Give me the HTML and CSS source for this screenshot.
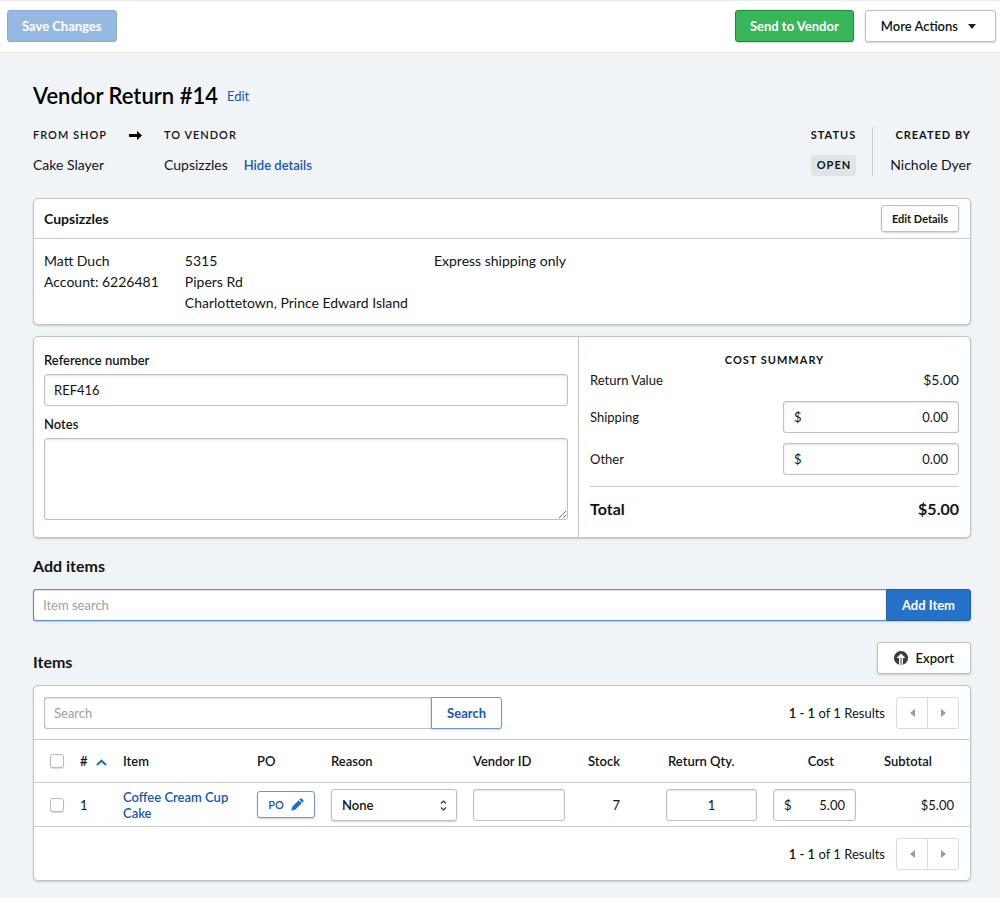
FILE: index.html
```html
<!DOCTYPE html>
<html lang="en">
<head>
<meta charset="utf-8">
<title>Vendor Return #14</title>
<link rel="stylesheet" href="styles.css">
</head>
<body>
<header class="topbar">
  <button class="btn btn-save" type="button">Save Changes</button>
  <div class="topbar-actions">
    <button class="btn btn-send" type="button">Send to Vendor</button>
    <button class="btn btn-more" type="button">More Actions
      <svg class="caret" viewBox="0 0 8 5" width="8" height="5" aria-hidden="true"><path d="M0 0h8L4 5z"/></svg>
    </button>
  </div>
</header>

<main class="page">
  <div class="title-row">
    <h1 class="title">Vendor Return #14</h1>
    <a class="link" href="#edit">Edit</a>
  </div>

  <section class="meta">
    <div class="meta-item meta-from">
      <div class="caps">From shop
        <svg class="arrow" viewBox="0 0 13 9" width="13" height="9" aria-hidden="true"><path d="M0 3h8V0l5 4.500-5 4.500V6H0z"/></svg>
      </div>
      <div class="meta-value">Cake Slayer</div>
    </div>
    <div class="meta-item">
      <div class="caps">To vendor</div>
      <div class="meta-value">Cupsizzles <a class="link link-strong" href="#details">Hide details</a></div>
    </div>
    <div class="meta-item meta-status">
      <div class="caps caps-bold">Status</div>
      <div class="meta-value"><span class="badge">Open</span></div>
    </div>
    <div class="meta-item meta-created">
      <div class="caps caps-bold">Created by</div>
      <div class="meta-value">Nichole Dyer</div>
    </div>
  </section>

  <section class="card">
    <div class="card-head">
      <h2 class="card-title">Cupsizzles</h2>
      <button class="btn btn-small" type="button">Edit Details</button>
    </div>
    <div class="vendor">
      <div>Matt Duch<br>Account: 6226481</div>
      <div>5315<br>Pipers Rd<br>Charlottetown, Prince Edward Island</div>
      <div>Express shipping only</div>
    </div>
  </section>

  <section class="card split">
    <div class="fields">
      <label class="label" for="ref">Reference number</label>
      <input class="input" id="ref" type="text" value="REF416">
      <label class="label label-notes" for="notes">Notes</label>
      <textarea class="input notes" id="notes"></textarea>
    </div>
    <div class="costs">
      <h2 class="caps caps-bold costs-title">Cost summary</h2>
      <div class="cost-row"><span>Return Value</span><span class="cost-value">$5.00</span></div>
      <div class="cost-row cost-edit"><label for="shipping">Shipping</label>
        <span class="money"><span>$</span><input id="shipping" type="text" value="0.00"></span></div>
      <div class="cost-row cost-edit"><label for="other">Other</label>
        <span class="money"><span>$</span><input id="other" type="text" value="0.00"></span></div>
      <div class="cost-row cost-total"><span>Total</span><span>$5.00</span></div>
    </div>
  </section>

  <h2 class="heading add-heading">Add items</h2>
  <form class="add-form">
    <input class="input add-input" type="text" placeholder="Item search" aria-label="Item search">
    <button class="btn btn-add" type="button">Add Item</button>
  </form>

  <div class="items-head">
    <h2 class="heading">Items</h2>
    <button class="btn btn-export" type="button">
      <svg viewBox="0 0 14 14" width="14" height="14" aria-hidden="true"><path fill="#3a3d40" d="M5 13.700A7 7 0 1 1 9 13.700V7h2.500L7 2.500 2.500 7H5z"/><path fill="#3a3d40" d="M6.500 7h1v7h-1z"/></svg>
      Export
    </button>
  </div>

  <section class="card items">
    <div class="toolbar">
      <form class="search">
        <input class="input search-input" type="text" placeholder="Search" aria-label="Search">
        <button class="btn btn-search" type="button">Search</button>
      </form>
      <div class="pager">
        <span><b>1 - 1</b> of 1 Results</span>
        <span class="pager-buttons">
          <button type="button" aria-label="Previous page"><svg viewBox="0 0 5 8" width="5" height="8"><path d="M5 0v8L0 4z"/></svg></button>
          <button type="button" aria-label="Next page"><svg viewBox="0 0 5 8" width="5" height="8"><path d="M0 0v8l5-4z"/></svg></button>
        </span>
      </div>
    </div>
    <table class="table">
      <colgroup>
        <col class="c-check"><col class="c-num"><col class="c-item"><col class="c-po"><col class="c-reason"><col class="c-vendor"><col class="c-stock"><col class="c-qty"><col class="c-cost"><col class="c-sub">
      </colgroup>
      <thead>
        <tr>
          <th class="check-cell"><input class="check" type="checkbox" aria-label="Select all items"></th>
          <th># <svg class="sort" viewBox="0 0 11 7" width="11" height="7" aria-hidden="true"><path d="M1 6l4.500-4.300L10 6" fill="none" stroke="#1c6dc9" stroke-width="2"/></svg></th>
          <th>Item</th>
          <th>PO</th>
          <th>Reason</th>
          <th>Vendor ID</th>
          <th class="num stock">Stock</th>
          <th class="qty-head">Return Qty.</th>
          <th class="num cost-head">Cost</th>
          <th>Subtotal</th>
        </tr>
      </thead>
      <tbody>
        <tr>
          <td class="check-cell"><input class="check" type="checkbox" aria-label="Select item 1"></td>
          <td>1</td>
          <td><a class="link item-link" href="#item">Coffee Cream Cup Cake</a></td>
          <td><button class="btn btn-po" type="button">PO
            <svg viewBox="0 0 14 14" width="13" height="13" aria-hidden="true"><path fill="#1c6dc9" d="M0.300 13.700l1.200-4.500 6.800-6.800 3.300 3.300-6.800 6.800zM9 1.700l1-1a1.300 1.300 0 0 1 1.700 0l1.600 1.600a1.300 1.300 0 0 1 0 1.700l-1 1z"/></svg></button></td>
          <td><span class="select-wrap"><select class="select" aria-label="Reason"><option>None</option></select>
            <svg class="select-arrows" viewBox="0 0 7 11" width="7" height="11" aria-hidden="true"><path d="M1 3.500L3.500 1 6 3.500M1 7.500L3.500 10 6 7.500" fill="none" stroke="#333" stroke-width="1.200"/></svg></span></td>
          <td><input class="input vendor-id" type="text" aria-label="Vendor ID"></td>
          <td class="num stock">7</td>
          <td><input class="input qty" type="text" value="1" aria-label="Return quantity"></td>
          <td><span class="money money-cell"><span>$</span><input type="text" value="5.00" aria-label="Cost"></span></td>
          <td class="num subtotal">$5.00</td>
        </tr>
      </tbody>
    </table>
    <div class="toolbar toolbar-foot">
      <div class="pager">
        <span><b>1 - 1</b> of 1 Results</span>
        <span class="pager-buttons">
          <button type="button" aria-label="Previous page"><svg viewBox="0 0 5 8" width="5" height="8"><path d="M5 0v8L0 4z"/></svg></button>
          <button type="button" aria-label="Next page"><svg viewBox="0 0 5 8" width="5" height="8"><path d="M0 0v8l5-4z"/></svg></button>
        </span>
      </div>
    </div>
  </section>
</main>
</body>
</html>
```
FILE: styles.css
```css
* { box-sizing: border-box; }

body {
  margin: 0;
  background: #f0f4f7;
  color: #111417;
  font: 13px/16px Lato, "Liberation Sans", sans-serif;
}

h1, h2 { margin: 0; }
input, button, select, textarea { font: inherit; color: inherit; }
svg { flex: none; }

.link { color: #1456c0; text-decoration: none; }
.link-strong { font-size: 13px; font-weight: 600; margin-left: 12px; }

.btn {
  display: inline-flex;
  align-items: center;
  justify-content: center;
  height: 32px;
  padding: 0 16px;
  border: 1px solid #b9c2c2;
  border-radius: 3px;
  background: #fff;
  font-weight: 600;
  white-space: nowrap;
  box-shadow: 0 1px 2px rgba(0, 0, 0, .18);
}

.topbar {
  display: flex;
  align-items: center;
  justify-content: space-between;
  height: 53px;
  padding: 0 4px 0 7px;
  background: #fff;
  border-bottom: 1px solid #e4e8eb;
  box-shadow: inset 0 1px 1px #e9ebec;
}
.topbar-actions { display: flex; gap: 11px; }
.btn-save, .btn-send { padding: 0 14px; color: #fff; font-weight: 700; }
.btn-save { background: #96b9e2; border-color: #87abd6; box-shadow: none; }
.btn-send { background: #38b65a; border-color: #159030; }
.btn-more { gap: 10px; padding: 0 19px 0 15px; }
.caret { fill: #222; }

.page { padding: 27px 29px 17px 33px; }

.title-row { display: flex; align-items: center; gap: 9px; height: 32px; }
.title { font-size: 22px; line-height: 32px; font-weight: 600; color: #000; }

.meta { display: flex; margin-top: 15px; padding-bottom: 22px; }
.meta-from { width: 131px; }
.caps {
  display: flex;
  align-items: center;
  justify-content: space-between;
  height: 16px;
  font-size: 11px;
  font-weight: 600;
  letter-spacing: 1px;
  text-transform: uppercase;
}
.caps-bold { font-weight: 700; }
.meta-from .caps { padding-right: 22px; }
.meta-value { display: flex; align-items: center; height: 22px; margin-top: 11px; font-size: 14px; gap: 4px; }
.meta-status { margin-left: auto; padding-right: 16px; }
.meta-created { border-left: 1px solid #c5cdcf; padding-left: 17px; }
.meta-created .caps { justify-content: flex-end; }
.badge {
  padding: 2px 5px 3px 6px;
  border-radius: 3px;
  background: #e0e4e5;
  font-size: 11px;
  font-weight: 700;
  letter-spacing: 1px;
  text-transform: uppercase;
}

.card {
  border: 1px solid #bcc5c7;
  border-radius: 5px;
  background: #fff;
  box-shadow: 0 1px 2px rgba(0, 0, 0, .18);
}
.card + .card { margin-top: 11px; }
.card-head {
  display: flex;
  align-items: center;
  justify-content: space-between;
  height: 40px;
  padding: 0 11px 0 10px;
  border-bottom: 1px solid #c5cdcf;
}
.card-title { font-size: 14px; font-weight: 700; }
.btn-small { height: 27px; padding: 0 10px; font-size: 11px; font-weight: 700; }
.vendor { display: flex; gap: 26px; padding: 11px 10px; font-size: 14px; line-height: 21px; }

.split { display: flex; }
.fields { flex: 1; display: flex; flex-direction: column; padding: 15px 10px 17px; }
.label { font-weight: 600; margin-bottom: 6px; }
.label-notes { margin-top: 10px; }
.input {
  width: 100%;
  height: 32px;
  padding: 0 9px;
  border: 1px solid #b9c2c2;
  border-radius: 3px;
  background: #fff;
  box-shadow: inset 0 1px 2px rgba(0, 0, 0, .12);
}
.input::placeholder { color: #9aa2a4; opacity: 1; }
.notes { height: 82px; resize: vertical; }

.costs { flex: 0 0 392px; padding: 15px 11px 5px; border-left: 1px solid #bcc5c7; }
.costs-title { justify-content: center; }
.cost-row { display: flex; align-items: center; justify-content: space-between; height: 23px; }
.cost-value { font-size: 14px; }
.cost-edit { height: 32px; margin-top: 10px; }
.money {
  display: flex;
  align-items: center;
  width: 176px;
  height: 32px;
  padding: 0 10px;
  border: 1px solid #b9c2c2;
  border-radius: 3px;
  background: #fff;
  box-shadow: inset 0 1px 2px rgba(0, 0, 0, .12);
}
.money input { flex: 1; min-width: 0; padding: 0; border: 0; background: none; text-align: right; }
.cost-total {
  height: 45px;
  margin-top: 11px;
  border-top: 1px solid #c5cdcf;
  font-size: 16px;
  font-weight: 700;
}

.heading { font-size: 16px; line-height: 20px; font-weight: 700; }
.add-heading { margin-top: 18px; }
.add-form { display: flex; margin-top: 13px; border-radius: 3px; box-shadow: 0 1px 2px rgba(0, 0, 0, .18); }
.add-input { flex: 1; border-color: #5b8ac9; border-radius: 3px 0 0 3px; border-right: 0; }
.btn-add { padding: 0 15px; border-color: #1c5fb0; border-radius: 0 3px 3px 0; background: #2672c8; color: #fff; font-weight: 700; box-shadow: none; }

.items-head { display: flex; align-items: center; justify-content: space-between; margin: 21px 0 11px; }
.items-head .heading { padding-top: 8px; }
.btn-export { gap: 8px; }

.toolbar { display: flex; align-items: center; justify-content: space-between; height: 53px; padding: 0 11px 0 10px; }
.toolbar-foot { justify-content: flex-end; }
.search { display: flex; width: 458px; }
.search-input { flex: 1; border-right: 0; border-radius: 3px 0 0 3px; }
.btn-search { padding: 0 15px; border-color: #6f97d3; border-radius: 0 3px 3px 0; color: #1456c0; font-weight: 700; }
.pager { display: flex; align-items: center; gap: 11px; }
.pager b { font-weight: 600; }
.pager-buttons { display: flex; border: 1px solid #d8dddd; border-radius: 3px; }
.pager-buttons button { display: flex; align-items: center; justify-content: center; width: 30px; height: 30px; padding: 0; border: 0; background: none; }
.pager-buttons button + button { width: 31px; border-left: 1px solid #d8dddd; }
.pager-buttons svg { fill: #979c9e; }

.table { width: 100%; table-layout: fixed; border-collapse: collapse; }
.table th, .table td { height: 43px; padding: 0; text-align: left; border-top: 1px solid #c5cdcf; }
.table th { font-weight: 600; }
.table td { height: 44px; border-bottom: 1px solid #c5cdcf; }
.c-check { width: 46px; }
.c-num { width: 43px; }
.c-po { width: 74px; }
.c-reason { width: 142px; }
.c-vendor { width: 115px; }
.c-stock { width: 78px; }
.c-qty { width: 107px; }
.c-cost { width: 111px; }
.c-sub { width: 86px; }
.table .check-cell { padding-left: 16px; }
.table .num { text-align: right; }
.table .stock { padding-right: 46px; }
.table .qty-head { padding-left: 2px; }
.table .cost-head { padding-right: 50px; }
.table .subtotal { padding-right: 16px; }
.sort { margin-left: 5px; }
.check {
  display: block;
  appearance: none;
  width: 14px;
  height: 14px;
  margin: 0;
  border: 1px solid #b4bcbc;
  border-radius: 3px;
  background: #fff;
  box-shadow: 0 1px 1px rgba(0, 0, 0, .15);
}
.item-link { display: block; max-width: 110px; font-weight: 600; }
.btn-po { width: 58px; height: 27px; gap: 7px; padding: 0; border-color: #6f97d3; color: #1456c0; font-size: 11px; }
.select-wrap { display: block; position: relative; width: 126px; }
.select {
  display: block;
  appearance: none;
  width: 100%;
  height: 32px;
  padding: 0 10px;
  border: 1px solid #b9c2c2;
  border-radius: 3px;
  background: #fff;
  font-weight: 600;
  box-shadow: 0 1px 2px rgba(0, 0, 0, .18);
}
.select-arrows { position: absolute; right: 10px; top: 11px; pointer-events: none; }
.vendor-id { display: block; width: 92px; }
.qty { display: block; width: 91px; text-align: center; }
.money-cell { width: 83px; }
```
